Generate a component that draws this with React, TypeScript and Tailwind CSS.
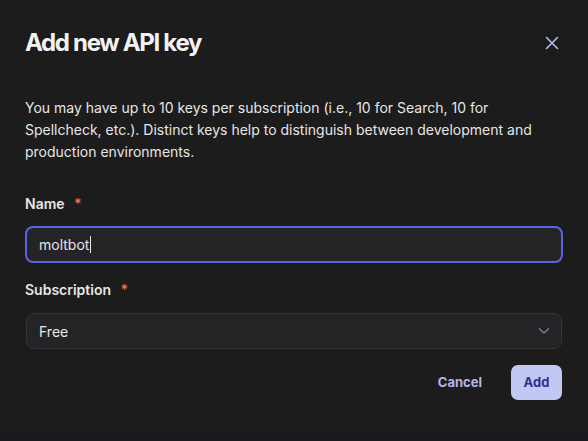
import React from "react";

export default function App() {
  return (
    <div className="w-[588px] h-[441px] bg-[#1a1b1e] flex flex-col" style={{ fontFamily: "Inter, 'Noto Sans', sans-serif" }}>
      <div className="h-[432px] bg-[#1c1c1c] px-[25px] pt-[27px] flex flex-col">
        <div className="flex items-center justify-between h-[32px]">
          <h2 className="text-[24px] leading-[32px] font-bold text-[#f2f2f2] tracking-[-0.055em]">Add new API key</h2>
          <button className="w-[24px] h-[24px] flex items-center justify-center mr-[-1px]">
            <svg width="14" height="14" viewBox="0 0 14 14" fill="none" stroke="#b7bcf0" strokeWidth="1.6" strokeLinecap="round">
              <path d="M1.5 1.5 L12.5 12.5 M12.5 1.5 L1.5 12.5" />
            </svg>
          </button>
        </div>
        <p className="mt-[38px] text-[14px] leading-[22px] text-[#e6e6e6] pr-[10px]">
          You may have up to 10 keys per subscription (i.e., 10 for Search, 10 for Spellcheck, etc.). Distinct keys help to distinguish between development and production environments.
        </p>
        <label className="mt-[31px] text-[14px] leading-[20px] font-semibold text-[#e6e6e6]">
          Name <span className="text-[#f06a5f] ml-[6px]">*</span>
        </label>
        <div className="mt-[12px] h-[37px] rounded-[8px] border-2 border-[#5b63e6] bg-[#242427] flex items-center px-[12px]">
          <span className="text-[14px] text-[#e6e6e6]">moltbot</span>
          <span className="w-px h-[17px] bg-[#e6e6e6] ml-[1px]"></span>
        </div>
        <label className="mt-[17px] text-[14px] leading-[20px] font-semibold text-[#e6e6e6]">
          Subscription <span className="text-[#f06a5f] ml-[6px]">*</span>
        </label>
        <div className="mt-[13px] mx-[1px] h-[36px] rounded-[8px] border border-[#333338] bg-[#242427] flex items-center justify-between pl-[12px] pr-[11px]">
          <span className="text-[14px] text-[#e6e6e6]">Free</span>
          <svg width="12" height="8" viewBox="0 0 12 8" fill="none" stroke="#6f7a86" strokeWidth="1.6" strokeLinecap="round" strokeLinejoin="round">
            <path d="M1.5 1.8 L6 6 L10.5 1.8" />
          </svg>
        </div>
        <div className="mt-[16px] flex justify-end items-center gap-[29px] mr-[1px]">
          <button className="text-[13px] font-bold text-[#b3b8e6]">Cancel</button>
          <button className="w-[51px] h-[35px] rounded-[7px] bg-[#c0c8f3] text-[13px] font-bold text-[#2e3192]">Add</button>
        </div>
      </div>
    </div>
  );
}
